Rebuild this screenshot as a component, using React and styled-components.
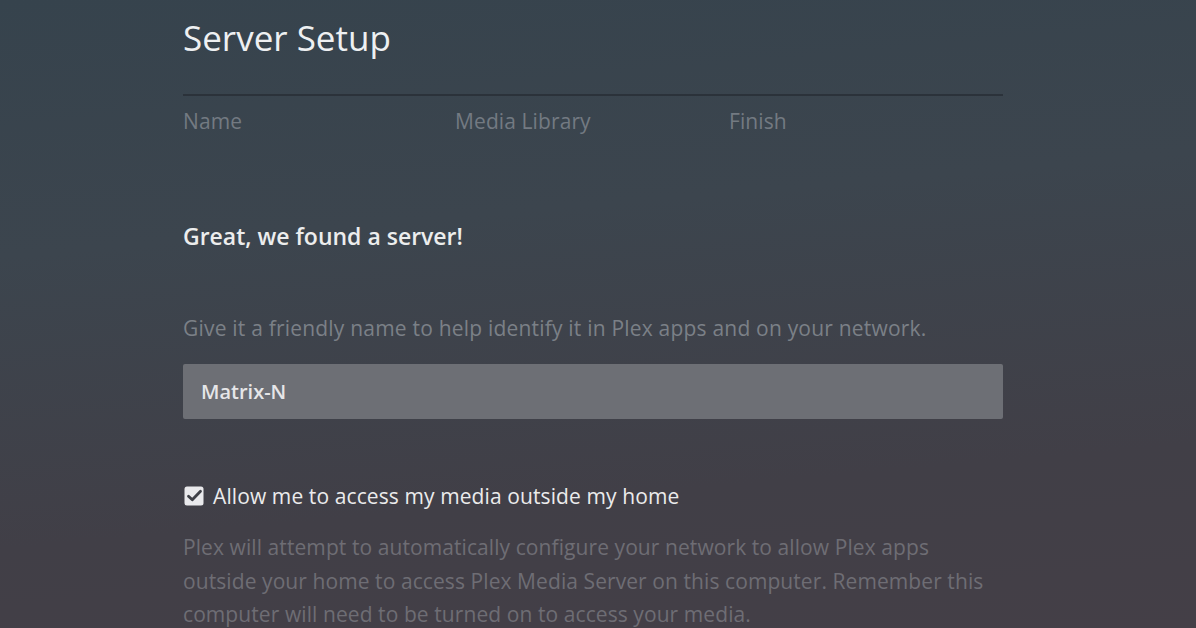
import React from 'react'
import styled, { createGlobalStyle } from 'styled-components'

const GlobalStyle = createGlobalStyle`
  html, body {
    margin: 0;
    padding: 0;
    height: 100%;
  }
  body {
    font-family: 'Open Sans', 'Noto Sans', sans-serif;
    background: #3d444c;
  }
  #root {
    min-height: 100%;
  }
`

export default function App() {
  return (
    <>
      <GlobalStyle />
      <StyledPage>
        <StyledWizard>
          <StyledTitle>Server Setup</StyledTitle>
          <StyledSteps>
            <StyledStep>Name</StyledStep>
            <StyledStep>Media Library</StyledStep>
            <StyledStep>Finish</StyledStep>
          </StyledSteps>

          <StyledHeading>Great, we found a server!</StyledHeading>
          <StyledHint>Give it a friendly name to help identify it in Plex apps and on your network.</StyledHint>
          <StyledInput type="text" defaultValue="Matrix-N" />

          <StyledCheckRow>
            <StyledCheckbox>
              <svg width="20" height="20" viewBox="0 0 20 20">
                <rect x="0.5" y="0.5" width="19" height="19" rx="2.5" fill="#e9e9ec" />
                <path d="M4.5 10.2 L8.3 13.8 L16.5 5.2" fill="none" stroke="#3e4047" strokeWidth="2.8" strokeLinecap="round" strokeLinejoin="round" />
              </svg>
            </StyledCheckbox>
            <span>Allow me to access my media outside my home</span>
          </StyledCheckRow>
          <StyledDescription>
            Plex will attempt to automatically configure your network to allow Plex apps
            outside your home to access Plex Media Server on this computer. Remember this
            computer will need to be turned on to access your media.
          </StyledDescription>
        </StyledWizard>
      </StyledPage>
    </>
  )
}

const StyledPage = styled.div`
  width: 1196px;
  height: 628px;
  overflow: hidden;
  background: linear-gradient(175deg, #36434d 0%, #3c454e 35%, #413f47 75%, #443f47 100%);
  padding-left: 183px;
  box-sizing: border-box;
`

const StyledWizard = styled.div`
  width: 820px;
  display: flex;
  flex-direction: column;
`

const StyledTitle = styled.h1`
  margin: 0;
  padding-top: 18px;
  padding-bottom: 36px;
  font-size: 35px;
  line-height: 40px;
  font-weight: 400;
  color: #eef0f2;
  border-bottom: 2px solid #2b323a;
`

const StyledSteps = styled.div`
  display: grid;
  grid-template-columns: 272px 274px 1fr;
  padding-top: 13px;
`

const StyledStep = styled.div`
  font-size: 21px;
  line-height: 24px;
  letter-spacing: 0.1px;
  color: #737a82;
`

const StyledHeading = styled.h2`
  margin: 88px 0 0;
  font-size: 23px;
  line-height: 30px;
  font-weight: 600;
  color: #eceded;
`

const StyledHint = styled.p`
  margin: 63px 0 0;
  font-size: 21px;
  line-height: 28px;
  letter-spacing: 0.2px;
  color: #7b8087;
`

const StyledInput = styled.input`
  margin-top: 22px;
  height: 55px;
  box-sizing: border-box;
  padding: 0 18px;
  border: none;
  border-radius: 2px;
  background: #6d6f75;
  color: #e6e6e8;
  font-family: 'Open Sans', 'Noto Sans', sans-serif;
  font-size: 20px;
  font-weight: 600;
  outline: none;
`

const StyledCheckRow = styled.label`
  margin-top: 63px;
  display: flex;
  align-items: center;
  gap: 9px;
  font-size: 21px;
  line-height: 28px;
  font-weight: 500;
  letter-spacing: 0.1px;
  color: #ebebec;
  padding-left: 1px;
`

const StyledCheckbox = styled.span`
  display: inline-flex;
  width: 20px;
  height: 20px;
`

const StyledDescription = styled.p`
  margin: 21px 0 0;
  width: 812px;
  font-size: 21px;
  line-height: 33.5px;
  letter-spacing: 0.08px;
  color: #6e6d74;
`
